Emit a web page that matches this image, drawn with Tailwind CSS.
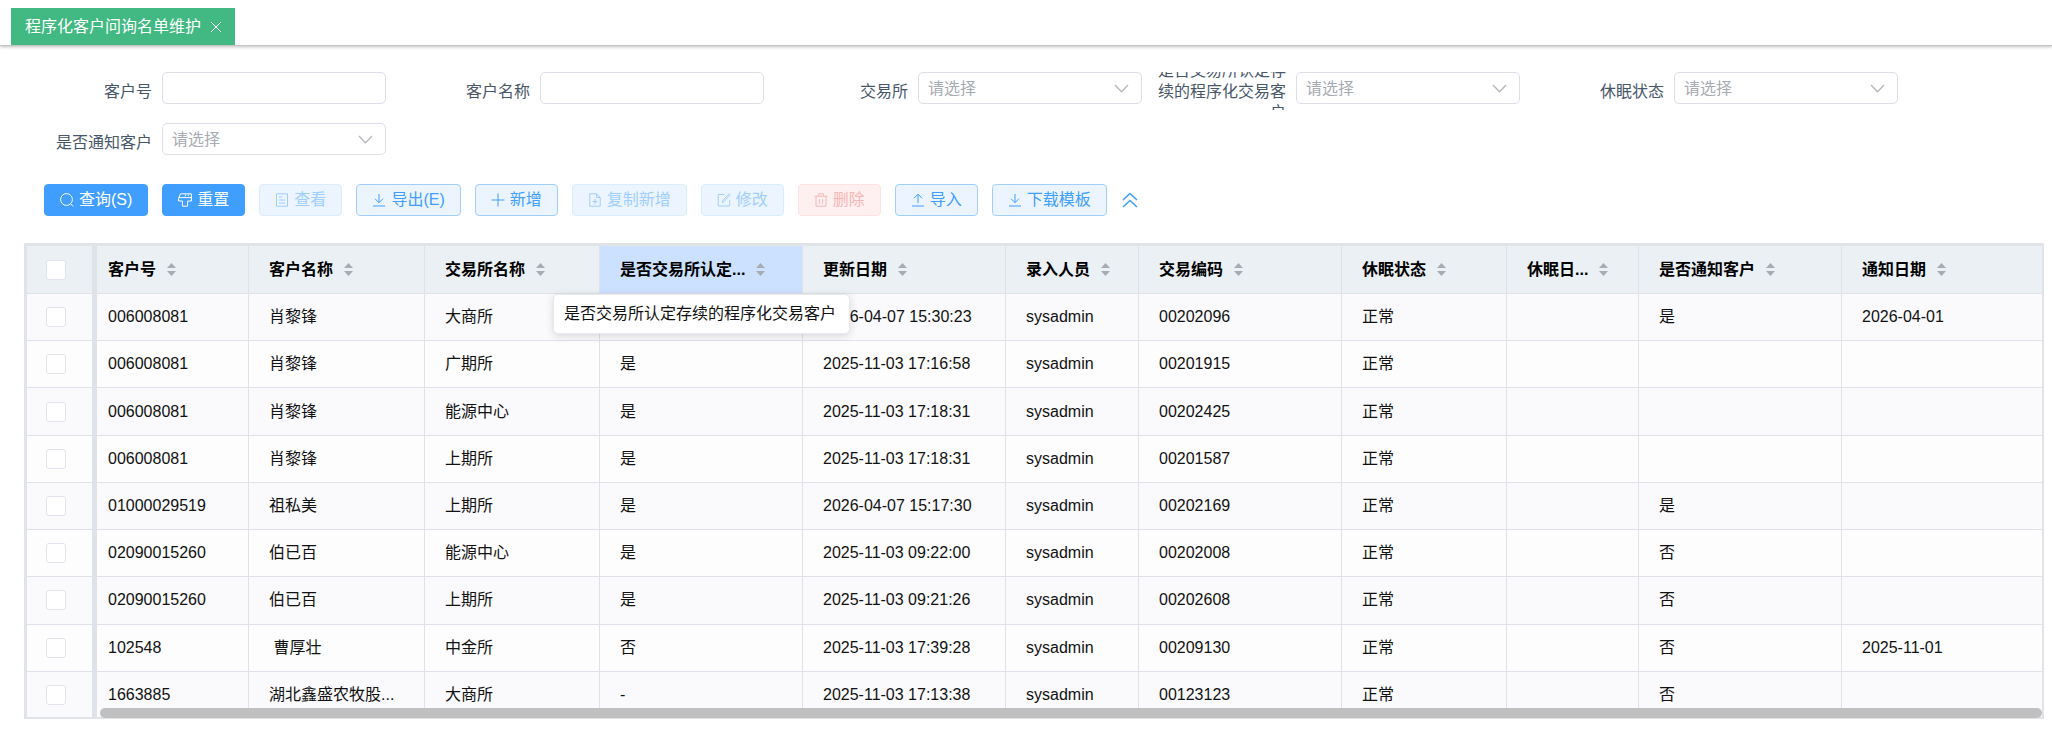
<!DOCTYPE html>
<html lang="zh-CN">
<head>
    <meta charset="UTF-8">
    <meta name="viewport" content="width=device-width, initial-scale=1.0">
    <title>程序化客户问询名单维护</title>
    <script src="https://cdn.jsdelivr.net/npm/@tailwindcss/browser@4"></script>
</head>
<body class="bg-white font-['Liberation_Sans','Noto_Sans_CJK_SC',sans-serif] text-base text-[#48576a]">

    <!-- 标签栏 -->
    <nav class="flex h-[46px] items-end border-b border-[#c4c4c4] pl-[11px] shadow-[0_1px_3px_rgba(0,0,0,0.25)]">
        <div class="flex h-[37px] items-center bg-[#42b983] pl-[14px] pr-3 text-white">
            <a href="#">程序化客户问询名单维护</a>
            <button type="button" aria-label="关闭" class="ml-2 p-px">
                <svg class="size-3" viewBox="0 0 12 12" fill="none" stroke="currentColor"><path d="M1 1l10 10M11 1L1 11"/></svg>
            </button>
        </div>
    </nav>

    <!-- 查询条件 -->
    <form id="queryForm" class="mr-[140px] ml-[22px] mt-[26px] grid grid-cols-5 gap-y-[13px] leading-[21px]">
    </form>

    <!-- 工具栏 -->
    <div id="toolbar" class="mt-[23px] flex items-center gap-[14px] pl-[44px]">
    </div>

    <!-- 数据表格 -->
    <div class="relative mt-[27px] ml-6 mr-2 border-3 border-r-2 border-b-2 border-[#e0e4e9] text-[#111]">
        <div class="h-[471px] overflow-hidden">
            <table class="h-[473px] w-full table-fixed border-separate border-spacing-0">
                <colgroup>
                    <col class="w-[65px]">
                    <col class="w-[156px]">
                    <col class="w-[176px]">
                    <col class="w-[175px]">
                    <col class="w-[203px]">
                    <col class="w-[203px]">
                    <col class="w-[133px]">
                    <col class="w-[203px]">
                    <col class="w-[165px]">
                    <col class="w-[132px]">
                    <col class="w-[203px]">
                    <col>
                </colgroup>
                <thead>
                    <tr id="headRow" class="h-12 bg-[#ebf0f4] text-left text-black"></tr>
                </thead>
                <tbody id="bodyRows"></tbody>
            </table>
        </div>
        <div class="absolute right-0 -bottom-px left-[73px] h-[10px] rounded-full bg-[#c0c0c0]"></div>
        <div role="tooltip" class="absolute top-12 left-[526px] flex h-10 items-center rounded-[5px] border border-[#e8eaee] bg-white pr-[13px] pl-[10px] whitespace-nowrap shadow-[0_2px_8px_rgba(0,0,0,0.14)]">是否交易所认定存续的程序化交易客户</div>
    </div>

    <script>
    const fields = [
        { id: 'custNo', label: '客户号', type: 'input' },
        { id: 'custName', label: '客户名称', type: 'input' },
        { id: 'exchange', label: '交易所', type: 'select' },
        { id: 'isProgram', label: '是否交易所认定存续的程序化交易客户', type: 'select' },
        { id: 'sleepStatus', label: '休眠状态', type: 'select' },
        { id: 'isNotified', label: '是否通知客户', type: 'select' }
    ];

    document.getElementById('queryForm').innerHTML = fields.map(f => `
        <div class="flex h-[38px] pr-[14px]">
            <label for="${f.id}" class="flex w-[140px] shrink-0 items-center justify-end overflow-hidden pr-[10px] text-right">${f.label}</label>
            ${f.type === 'input'
                ? `<input id="${f.id}" type="text" class="h-8 w-full min-w-0 rounded-[5px] border border-[#dcdfe6] px-[10px] outline-none">`
                : `<div class="relative w-full min-w-0">
                    <select id="${f.id}" class="h-8 w-full appearance-none rounded-[5px] border border-[#dcdfe6] bg-white px-[9px] text-[#a8abb2] outline-none"><option>请选择</option></select>
                    <svg class="pointer-events-none absolute top-3 right-[13px] h-[9px] w-[15px]" viewBox="0 0 15 9" fill="none" stroke="#b4b7bd" stroke-width="1.3"><path d="M1 1l6.5 6.800L14 1"/></svg>
                </div>`}
        </div>
    `).join('');

    const icons = {
        search: '<circle cx="6.5" cy="6.5" r="5.9"/><path d="M10.800 11l2.400 2.400"/>',
        brush: '<path d="M2.500.8h10.900V8H9.600v5.200H4.400V8H.6V5.200zM1 4.600h12.400M7 3.500l.8-2.200M10 3l.8-1.700"/>',
        view: '<path d="M1.500.8h11v12.400h-11zM4 4h3M4 7h6M4 10h6"/>',
        download: '<path d="M7 1v8.500M3 5.700l4 4 4-4M1 13h12"/>',
        plus: '<path d="M7 .5v13M.5 7h13"/>',
        copy: '<path d="M8.500.8H1.800v12.400h10.400V4.500zM8.500.8v3.700h3.700M7 6v5M4.500 8.500h5"/>',
        edit: '<path d="M7.500 1.500H1.200v11.500h11.500V7M12.200.8l1 1L7 8.600l-1.800.7.600-1.900z"/>',
        trash: '<path d="M.5 3.200h13M4.700 3V.8h4.600V3M2 3.200v10h10v-10M5.400 6v4.700M8.600 6v4.700"/>',
        upload: '<path d="M7 10V1.300M3 5.200l4-4 4 4M1 13h12"/>'
    };
    const styles = {
        primary: 'border-[#409eff] bg-[#409eff] text-white',
        plain: 'border-[#a0cfff] bg-[#ecf5ff] text-[#409eff]',
        plainOff: 'border-[#d9ecff] bg-[#ecf5ff] text-[#a0cfff]',
        dangerOff: 'border-[#fde2e2] bg-[#fef0f0] text-[#fab6b6]'
    };
    const buttons = [
        ['查询(S)', 'search', 'primary'],
        ['重置', 'brush', 'primary'],
        ['查看', 'view', 'plainOff'],
        ['导出(E)', 'download', 'plain'],
        ['新增', 'plus', 'plain'],
        ['复制新增', 'copy', 'plainOff'],
        ['修改', 'edit', 'plainOff'],
        ['删除', 'trash', 'dangerOff'],
        ['导入', 'upload', 'plain'],
        ['下载模板', 'download', 'plain']
    ];

    document.getElementById('toolbar').innerHTML = buttons.map(([text, icon, style]) => `
        <button type="button" ${style.endsWith('Off') ? 'disabled' : ''} class="flex h-8 items-center gap-[5px] rounded-[4px] border px-[15px] ${styles[style]}">
            <svg class="size-[14px]" viewBox="0 0 14 14" fill="none" stroke="currentColor">${icons[icon]}</svg>${text}
        </button>
    `).join('') + `
        <button type="button" aria-label="收起" class="text-[#409eff]">
            <svg class="h-4 w-[18px]" viewBox="0 0 18 16" fill="none" stroke="currentColor" stroke-width="1.6"><path d="M2 8l7-6.500L16 8M2 15l7-6.500L16 15"/></svg>
        </button>`;

    const columns = ['客户号', '客户名称', '交易所名称', '是否交易所认定...', '更新日期', '录入人员', '交易编码', '休眠状态', '休眠日...', '是否通知客户', '通知日期'];
    const rows = [
        ['006008081', '肖黎锋', '大商所', '是', '2026-04-07 15:30:23', 'sysadmin', '00202096', '正常', '', '是', '2026-04-01'],
        ['006008081', '肖黎锋', '广期所', '是', '2025-11-03 17:16:58', 'sysadmin', '00201915', '正常', '', '', ''],
        ['006008081', '肖黎锋', '能源中心', '是', '2025-11-03 17:18:31', 'sysadmin', '00202425', '正常', '', '', ''],
        ['006008081', '肖黎锋', '上期所', '是', '2025-11-03 17:18:31', 'sysadmin', '00201587', '正常', '', '', ''],
        ['01000029519', '祖私美', '上期所', '是', '2026-04-07 15:17:30', 'sysadmin', '00202169', '正常', '', '是', ''],
        ['02090015260', '伯已百', '能源中心', '是', '2025-11-03 09:22:00', 'sysadmin', '00202008', '正常', '', '否', ''],
        ['02090015260', '伯已百', '上期所', '是', '2025-11-03 09:21:26', 'sysadmin', '00202608', '正常', '', '否', ''],
        ['102548', '&nbsp;曹厚壮', '中金所', '否', '2025-11-03 17:39:28', 'sysadmin', '00209130', '正常', '', '否', '2025-11-01'],
        ['1663885', '湖北鑫盛农牧股...', '大商所', '-', '2025-11-03 17:13:38', 'sysadmin', '00123123', '正常', '', '否', '']
    ];

    const checkbox = name => `<input type="checkbox" aria-label="${name}" class="ml-[19px] block size-5 appearance-none rounded-[3px] border border-[#e2e4ec] bg-white">`;
    // 首列左侧为固定列分隔条
    const edge = i => i === 0 ? 'border-l-5 pl-[11px]' : 'border-l pl-5';

    document.getElementById('headRow').innerHTML = `<th class="border-b border-[#dfe2e8]">${checkbox('全选')}</th>` + columns.map((name, i) => `
        <th class="border-b border-[#dfe2e8] ${edge(i)} ${i === 3 ? 'bg-[#cce0ff]' : ''}">
            <div class="flex items-center gap-[11px] whitespace-nowrap">
                <span>${name}</span>
                <svg class="h-[13px] w-[9px] shrink-0" viewBox="0 0 9 13" fill="#a8abb2"><path d="M0 5L4.500 0L9 5zM0 8h9L4.500 13z"/></svg>
            </div>
        </th>
    `).join('');

    document.getElementById('bodyRows').innerHTML = rows.map((row, n) => `
        <tr class="h-[47px] ${n % 2 ? 'bg-[#fdfdfd]' : 'bg-[#fafafc]'}">
            <td class="border-b border-[#dfe2e8]">${checkbox('选择 ' + row[0])}</td>
            ${row.map((v, i) => `<td class="whitespace-nowrap border-b border-[#dfe2e8] ${edge(i)}">${v}</td>`).join('')}
        </tr>
    `).join('');
    </script>
</body>
</html>
